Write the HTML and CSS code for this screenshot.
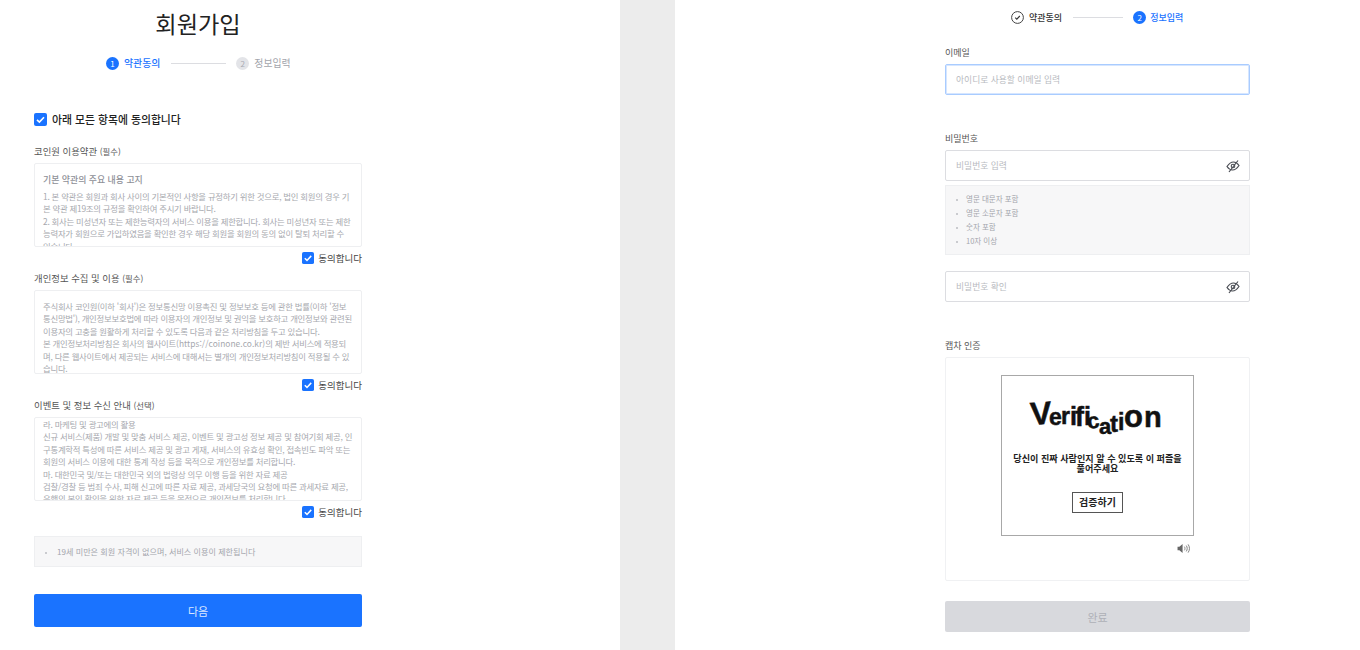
FILE: index.html
```html
<!DOCTYPE html>
<html lang="ko">
<head>
    <meta charset="UTF-8">
    <meta name="viewport" content="width=device-width, initial-scale=1.0">
    <title>회원가입</title>
    <link rel="stylesheet" href="styles.css">
</head>
<body>
    <div class="page">
        <!-- 1단계: 약관동의 -->
        <section class="pane pane-left">
            <h1 class="title">회원가입</h1>
            <div class="steps steps-left">
                <span class="step-num active">1</span>
                <span class="step-text active">약관동의</span>
                <span class="step-line"></span>
                <span class="step-num">2</span>
                <span class="step-text">정보입력</span>
            </div>

            <div class="check-all">
                <svg class="check" viewBox="0 0 13 13"><rect width="13" height="13" rx="2" fill="#1a73ff"/><path d="M3 6.8l2.4 2.3L10 4.2" fill="none" stroke="#fff" stroke-width="1.6"/></svg>
                <span>아래 모든 항목에 동의합니다</span>
            </div>

            <div class="term-label">코인원 이용약관 <small>(필수)</small></div>
            <div class="term-box">
                <strong>기본 약관의 주요 내용 고지</strong>
                <p>1. 본 약관은 회원과 회사 사이의 기본적인 사항을 규정하기 위한 것으로, 법인 회원의 경우 기본 약관 제19조의 규정을 확인하여 주시기 바랍니다.</p>
                <p>2. 회사는 미성년자 또는 제한능력자의 서비스 이용을 제한합니다. 회사는 미성년자 또는 제한능력자가 회원으로 가입하였음을 확인한 경우 해당 회원을 회원의 동의 없이 탈퇴 처리할 수 있습니다.</p>
            </div>
            <div class="agree">
                <svg class="check" viewBox="0 0 13 13"><rect width="13" height="13" rx="2" fill="#1a73ff"/><path d="M3 6.8l2.4 2.3L10 4.2" fill="none" stroke="#fff" stroke-width="1.6"/></svg>
                <span>동의합니다</span>
            </div>

            <div class="term-label">개인정보 수집 및 이용 <small>(필수)</small></div>
            <div class="term-box">
                <p>주식회사 코인원(이하 '회사')은 정보통신망 이용촉진 및 정보보호 등에 관한 법률(이하 '정보통신망법'), 개인정보보호법에 따라 이용자의 개인정보 및 권익을 보호하고 개인정보와 관련된 이용자의 고충을 원활하게 처리할 수 있도록 다음과 같은 처리방침을 두고 있습니다.</p>
                <p>본 개인정보처리방침은 회사의 웹사이트<span class="term-url">(https://coinone.co.kr)</span>의 제반 서비스에 적용되며, 다른 웹사이트에서 제공되는 서비스에 대해서는 별개의 개인정보처리방침이 적용될 수 있습니다.</p>
            </div>
            <div class="agree">
                <svg class="check" viewBox="0 0 13 13"><rect width="13" height="13" rx="2" fill="#1a73ff"/><path d="M3 6.8l2.4 2.3L10 4.2" fill="none" stroke="#fff" stroke-width="1.6"/></svg>
                <span>동의합니다</span>
            </div>

            <div class="term-label">이벤트 및 정보 수신 안내 <small>(선택)</small></div>
            <div class="term-box scrolled">
                <p>라. 마케팅 및 광고에의 활용</p>
                <p>신규 서비스(제품) 개발 및 맞춤 서비스 제공, 이벤트 및 광고성 정보 제공 및 참여기회 제공, 인구통계학적 특성에 따른 서비스 제공 및 광고 게재, 서비스의 유효성 확인, 접속빈도 파악 또는 회원의 서비스 이용에 대한 통계 작성 등을 목적으로 개인정보를 처리합니다.</p>
                <p>마. 대한민국 및/또는 대한민국 외의 법령상 의무 이행 등을 위한 자료 제공</p>
                <p>검찰/경찰 등 범죄 수사, 피해 신고에 따른 자료 제공, 과세당국의 요청에 따른 과세자료 제공, 은행의 본인 확인을 위한 자료 제공 등을 목적으로 개인정보를 처리합니다</p>
            </div>
            <div class="agree">
                <svg class="check" viewBox="0 0 13 13"><rect width="13" height="13" rx="2" fill="#1a73ff"/><path d="M3 6.8l2.4 2.3L10 4.2" fill="none" stroke="#fff" stroke-width="1.6"/></svg>
                <span>동의합니다</span>
            </div>

            <ul class="notice notice-age">
                <li>19세 미만은 회원 자격이 없으며, 서비스 이용이 제한됩니다</li>
            </ul>

            <button class="btn btn-next">다음</button>
        </section>

        <div class="divider"></div>

        <!-- 2단계: 정보입력 -->
        <section class="pane pane-right">
            <div class="steps steps-right">
                <svg class="step-done" viewBox="0 0 13 13"><circle cx="6.5" cy="6.5" r="5.9" fill="none" stroke="#444" stroke-width="1"/><path d="M4.2 6.7l1.6 1.5 3-3.2" fill="none" stroke="#333" stroke-width="1.1"/></svg>
                <span class="step-text done">약관동의</span>
                <span class="step-line"></span>
                <span class="step-num active">2</span>
                <span class="step-text active">정보입력</span>
            </div>

            <label class="field-label label-email">이메일</label>
            <div class="field focus"><span class="placeholder">아이디로 사용할 이메일 입력</span></div>

            <label class="field-label label-password">비밀번호</label>
            <div class="field">
                <span class="placeholder">비밀번호 입력</span>
                <svg class="eye" viewBox="0 0 14 14"><path d="M1 7.5C3 4.500 5 3 7.500 3c1.600 0 3.600.8 5.500 3.500C11 9.500 9 11 6.500 11c-1.600 0-3.600-.8-5.500-3.500z" fill="none" stroke="#4a4d54" stroke-width="1.2"/><circle cx="7" cy="7" r="1.8" fill="none" stroke="#4a4d54" stroke-width="1.1"/><path d="M3 13L12 1.5" stroke="#4a4d54" stroke-width="1.2"/></svg>
            </div>
            <ul class="notice notice-rules">
                <li>영문 대문자 포함</li>
                <li>영문 소문자 포함</li>
                <li>숫자 포함</li>
                <li>10자 이상</li>
            </ul>
            <div class="field field-confirm">
                <span class="placeholder">비밀번호 확인</span>
                <svg class="eye" viewBox="0 0 14 14"><path d="M1 7.5C3 4.500 5 3 7.500 3c1.600 0 3.600.8 5.500 3.500C11 9.500 9 11 6.500 11c-1.600 0-3.600-.8-5.500-3.500z" fill="none" stroke="#4a4d54" stroke-width="1.2"/><circle cx="7" cy="7" r="1.8" fill="none" stroke="#4a4d54" stroke-width="1.1"/><path d="M3 13L12 1.5" stroke="#4a4d54" stroke-width="1.2"/></svg>
            </div>

            <label class="field-label label-captcha">캡차 인증</label>
            <div class="captcha">
                <div class="puzzle">
                    <svg class="puzzle-word" viewBox="0 0 140 44">
                        <text class="puzzle-glyph"><tspan x="3" y="26" font-size="32" rotate="-4">V</tspan><tspan x="21" y="26" font-size="23">e</tspan><tspan x="33" y="25" font-size="23">r</tspan><tspan x="42" y="26" font-size="25">i</tspan><tspan x="47" y="27" font-size="27">f</tspan><tspan x="56" y="26" font-size="25">i</tspan><tspan x="60" y="30" font-size="22" rotate="-8">c</tspan><tspan x="71" y="35" font-size="22">a</tspan><tspan x="82" y="33" font-size="24">t</tspan><tspan x="90" y="31" font-size="23">i</tspan><tspan x="96" y="28" font-size="31">o</tspan><tspan x="116" y="28" font-size="29">n</tspan></text>
                    </svg>
                    <p class="puzzle-text">당신이 진짜 사람인지 알 수 있도록 이 퍼즐을 풀어주세요</p>
                    <span class="puzzle-btn">검증하기</span>
                </div>
                <svg class="audio" viewBox="0 0 14 12"><path d="M0.5 4h2l3.5-3v10L2.5 8h-2z" fill="#666"/><path d="M8 4c.8 1.3.8 2.7 0 4M10 2.8c1.4 2 1.4 4.4 0 6.4M12 1.5c2 2.8 2 6.2 0 9" fill="none" stroke="#777" stroke-width="1"/></svg>
            </div>

            <button class="btn btn-done">완료</button>
        </section>
    </div>
</body>
</html>
```

FILE: styles.css
```css
* {
    box-sizing: border-box;
}
html, body {
    height: 100%;
}
body {
    margin: 0;
    overflow: hidden;
    background-color: #fff;
    color: #333;
    font-family: "Noto Sans CJK KR", "Noto Sans", sans-serif;
}
.page {
    display: flex;
    height: 650px;
}
.pane-left {
    width: 620px;
    padding: 0 258px 0 34px;
}
.divider {
    width: 55px;
    background-color: #ececec;
}
.pane-right {
    flex: 1;
    padding: 0 110px 0 270px;
}
.title {
    margin: 6px 0 0;
    font-size: 23.2px;
    line-height: 34px;
    font-weight: 400;
    text-align: center;
    color: #222;
}

/* steps */
.steps {
    display: flex;
    align-items: center;
    height: 14px;
    font-size: 9.9px;
}
.steps-left {
    margin: 16px 0 0 72px;
}
.steps-right {
    margin: 10px 0 0 66px;
    font-size: 9px;
}
.step-num {
    width: 13px;
    height: 13px;
    border-radius: 50%;
    margin-right: 5px;
    background-color: #e3e4e8;
    color: #a9abb2;
    font-size: 8px;
    line-height: 13px;
    text-align: center;
}
.step-num.active {
    background-color: #1a73ff;
    color: #fff;
}
.steps-right .step-num {
    margin-right: 4px;
}
.step-done {
    width: 13px;
    height: 13px;
    margin-right: 5px;
}
.step-text {
    color: #a3a5ac;
    white-space: nowrap;
}
.step-text.active {
    color: #1a73ff;
    font-weight: 500;
}
.step-text.done {
    color: #333;
    font-weight: 500;
}
.step-line {
    height: 1px;
    background-color: #dcdde1;
    margin: 0 10px 0 11px;
}
.steps-left .step-line {
    width: 55px;
}
.steps-right .step-line {
    width: 50px;
}

/* terms */
.check {
    width: 13px;
    height: 13px;
    flex: none;
}
.check-all {
    display: flex;
    align-items: center;
    gap: 5px;
    height: 14px;
    margin-top: 42px;
    font-size: 10.85px;
    font-weight: 500;
    color: #222;
}
.term-label {
    height: 14px;
    margin-top: 18px;
    font-size: 9.4px;
    line-height: 14px;
    color: #555;
}
.term-label small {
    font-size: 8.4px;
}
.agree + .term-label {
    margin-top: 6px;
}
.term-box {
    height: 84px;
    margin-top: 5px;
    padding: 9px 8px 0 8px;
    overflow: hidden;
    border: 1px solid #eeeff1;
    border-radius: 2px;
    font-size: 8.4px;
    letter-spacing: -0.25px;
    line-height: 12.4px;
    color: #a6a8ae;
}
.term-box p {
    margin: 0;
}
.term-box strong {
    display: block;
    margin-bottom: 3px;
    font-size: 8.9px;
    letter-spacing: 0;
    font-weight: 500;
    line-height: 14px;
    color: #8e9097;
}
.term-box.scrolled {
    padding-top: 0;
}
.term-url {
    letter-spacing: 0.05px;
}
.agree {
    display: flex;
    align-items: center;
    justify-content: flex-end;
    gap: 4px;
    height: 14px;
    margin-top: 4px;
    font-size: 9.5px;
    color: #444;
}
.agree .check {
    width: 12px;
    height: 12px;
}

/* notice */
.notice {
    margin: 0;
    padding: 0 0 0 9px;
    list-style: none;
    background-color: #f7f7f8;
    border: 1px solid #eeeff1;
    color: #a3a5ac;
}
.notice li {
    position: relative;
    padding-left: 13px;
}
.notice li::before {
    content: "";
    position: absolute;
    left: 1px;
    top: 50%;
    width: 2px;
    height: 2px;
    border-radius: 50%;
    background-color: #bbbcc2;
}
.notice-age {
    display: flex;
    align-items: center;
    height: 31px;
    margin-top: 17px;
    font-size: 8.1px;
}
.notice-rules {
    display: flex;
    flex-direction: column;
    justify-content: center;
    height: 70px;
    margin-top: 4px;
    font-size: 7.5px;
    line-height: 14px;
}
.notice-rules li {
    padding-left: 11px;
}

/* buttons */
.btn {
    display: block;
    width: 100%;
    border: none;
    border-radius: 2px;
    font-family: inherit;
    font-size: 11px;
}
.btn-next {
    height: 33px;
    margin-top: 27px;
    background-color: #1a73ff;
    color: #dbe8ff;
}
.btn-done {
    height: 31px;
    margin-top: 20px;
    background-color: #d8d9dd;
    color: #aeb0b7;
}

/* form */
.field-label {
    display: block;
    height: 14px;
    font-size: 9px;
    line-height: 14px;
    color: #555;
}
.label-email {
    margin-top: 22px;
}
.label-password {
    margin-top: 37px;
}
.label-captcha {
    margin-top: 37px;
}
.field {
    display: flex;
    align-items: center;
    justify-content: space-between;
    height: 31px;
    margin-top: 4px;
    padding: 0 10px;
    border: 1px solid #dcdde1;
    border-radius: 2px;
}
.field.focus {
    border-color: #a9ccff;
    box-shadow: inset 0 0 0 1px #d6e6ff;
}
.field-confirm {
    margin-top: 16px;
}
.placeholder {
    font-size: 8.77px;
    color: #b8bac0;
}
.eye {
    width: 14px;
    height: 14px;
    margin-right: -1px;
}

/* captcha */
.captcha {
    display: flex;
    flex-direction: column;
    align-items: center;
    height: 224px;
    margin-top: 4px;
    padding-top: 17px;
    border: 1px solid #f0f1f3;
    border-radius: 2px;
}
.puzzle {
    display: flex;
    flex-direction: column;
    align-items: center;
    width: 193px;
    height: 161px;
    padding-top: 23px;
    border: 1px solid #a8a8a8;
}
.puzzle-word {
    flex: none;
    width: 140px;
    height: 44px;
    overflow: visible;
}
.puzzle-glyph {
    font-family: "Liberation Sans", sans-serif;
    font-weight: 700;
    fill: #111;
    stroke: #111;
    stroke-width: 0.5;
}
.puzzle-text {
    margin: 10px 0 0;
    padding: 0 8px;
    font-size: 9.1px;
    font-weight: 700;
    line-height: 10px;
    text-align: center;
    color: #222;
}
.puzzle-btn {
    margin-top: 19px;
    padding: 0 6px;
    height: 21px;
    border: 1px solid #555;
    font-size: 10px;
    font-weight: 700;
    line-height: 17px;
    color: #222;
}
.audio {
    width: 13px;
    height: 11px;
    margin: 7px 0 0 172px;
}
```
